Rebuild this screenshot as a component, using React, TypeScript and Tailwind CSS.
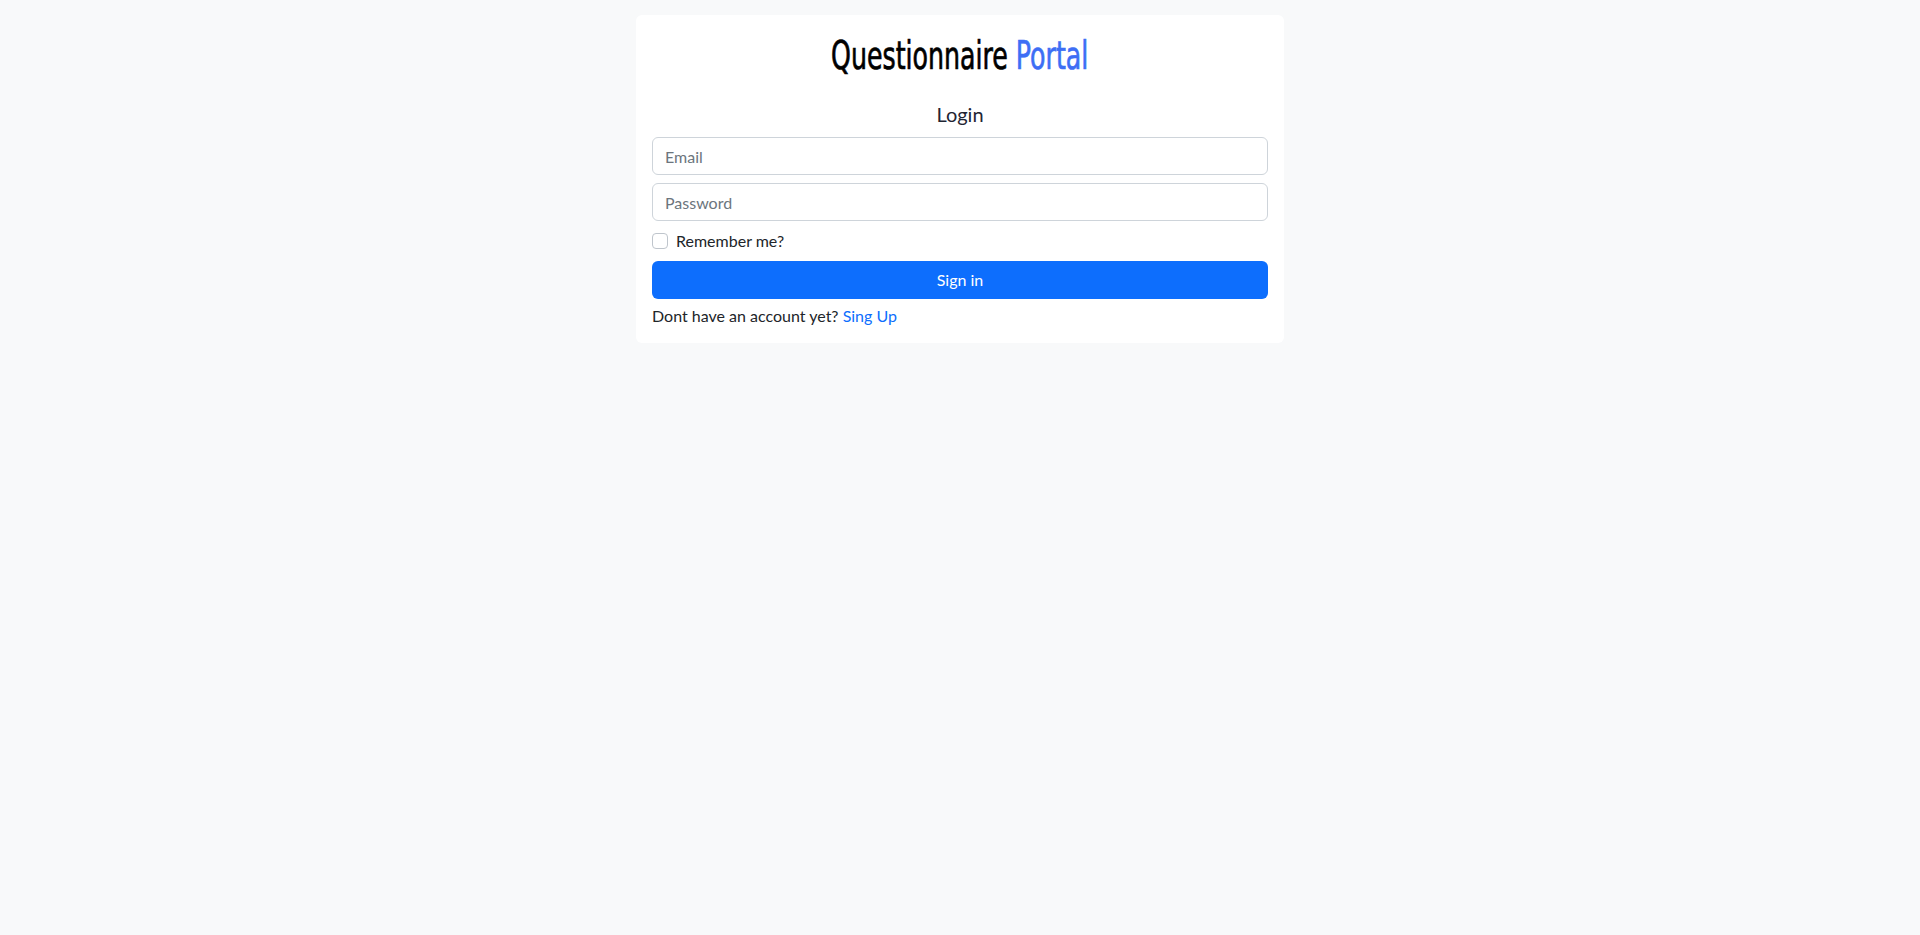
export default function App() {
  return (
    <div className="min-h-screen bg-[#f8f9fa] pt-[15px] flex justify-center font-['Lato','Open_Sans',sans-serif] text-[#212529]">
      <div className="w-[648px] h-fit bg-white rounded-[6px] px-4 pt-[18px] pb-[15px]">
        <h1 className="h-[44px] flex items-center justify-center">
          <span className="inline-block whitespace-nowrap scale-x-[0.72] text-[39px] leading-none font-normal [-webkit-text-stroke:0.7px_currentColor] font-['DejaVu_Sans_Condensed','DejaVu_Sans',sans-serif] text-black">
            Questionnaire <span className="text-[#3d6ef5]">Portal</span>
          </span>
        </h1>

        <h5 className="mt-[25px] text-center text-[20px] leading-[24px] text-[#1f2533]">Login</h5>

        <form className="mt-[11px]" onSubmit={(e) => e.preventDefault()}>
          <input
            type="email"
            placeholder="Email"
            className="block w-full h-[38px] px-3 border border-[#ced4da] rounded-[6px] text-base placeholder:text-[#6c757d] outline-none"
          />
          <input
            type="password"
            placeholder="Password"
            className="mt-[8px] block w-full h-[38px] px-3 border border-[#ced4da] rounded-[6px] text-base placeholder:text-[#6c757d] outline-none"
          />

          <label className="mt-[8px] flex items-center h-[24px] text-base">
            <input
              type="checkbox"
              className="appearance-none w-4 h-4 border border-[#bfc5cc] rounded-[4px] bg-white mr-[8px]"
            />
            <span>Remember me?</span>
          </label>

          <button
            type="submit"
            className="mt-[7.5px] w-full h-[38px] bg-[#0d6efd] text-white text-base rounded-[6px]"
          >
            Sign in
          </button>
        </form>

        <p className="mt-[5px] text-base leading-[24px]">
          Dont have an account yet? <a href="#" className="text-[#0d6efd]">Sing Up</a>
        </p>
      </div>
    </div>
  );
}
